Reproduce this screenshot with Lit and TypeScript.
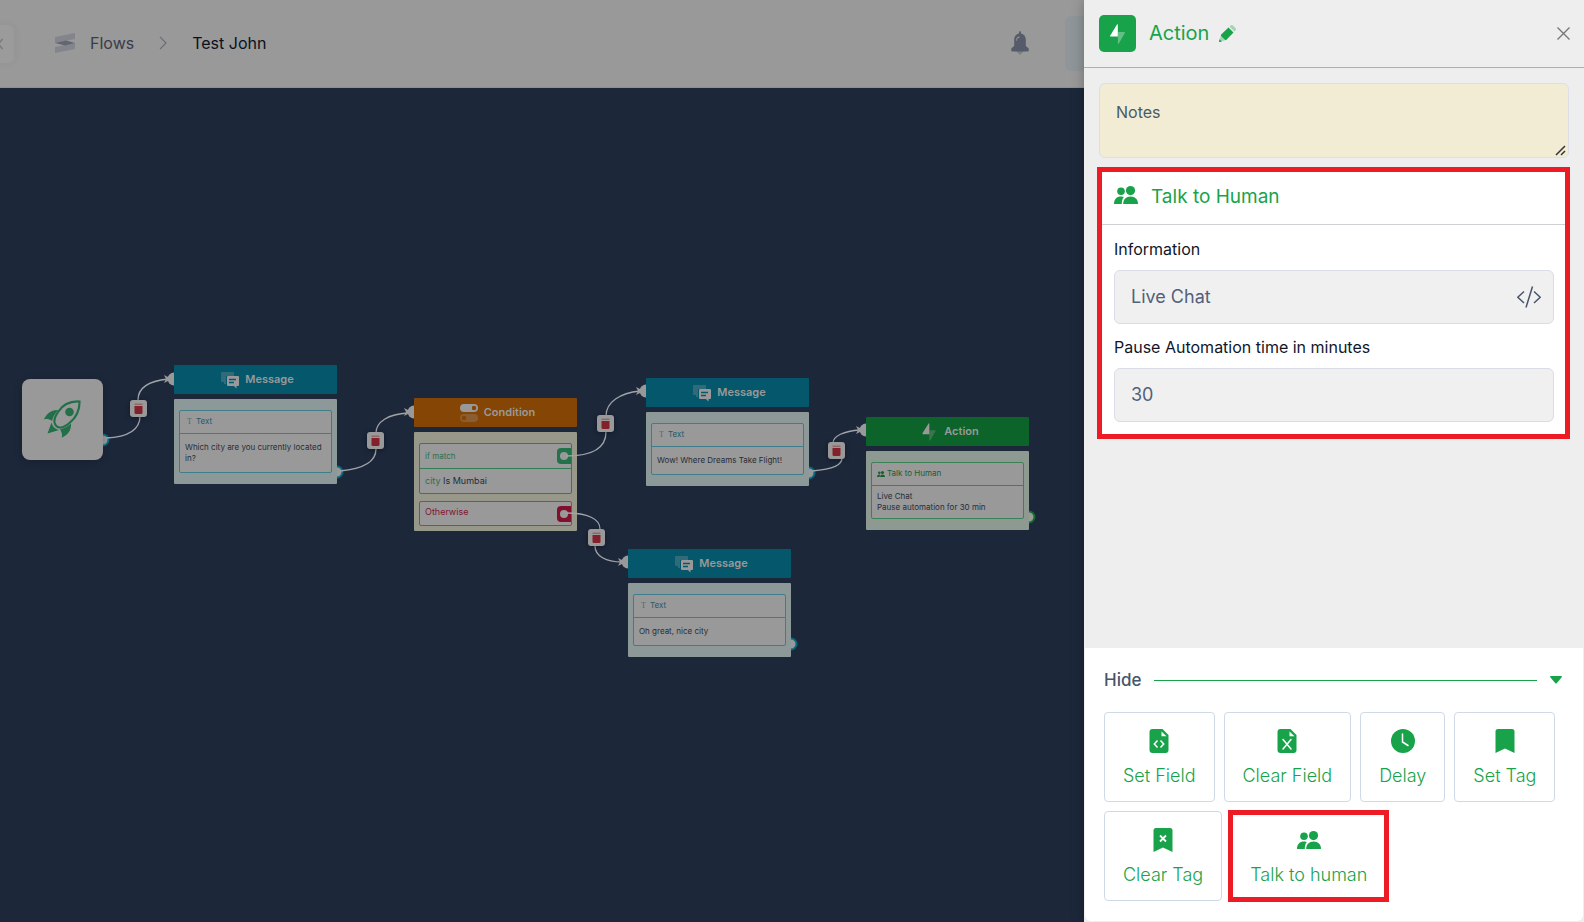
import { LitElement, html, svg, css, nothing } from "lit";
import { customElement, property, state } from "lit/decorators.js";
import { classMap } from "lit/directives/class-map.js";
import { styleMap } from "lit/directives/style-map.js";

const people = html`<svg viewBox="0 0 24 18" fill="currentColor" aria-hidden="true">
  <circle cx="7" cy="5.2" r="3.8" />
  <circle cx="16.5" cy="4.6" r="4.6" />
  <path d="M0 18c0-5 2.800-7.600 7-7.600 1.300 0 2 .2 2.800.6C8.400 12.600 7.800 15 7.800 18z" />
  <path d="M9.200 18c0-4.600 3-7.400 7.400-7.400S24 13.400 24 18z" />
</svg>`;

const bolt = html`<svg viewBox="0 0 18 24" fill="currentColor" aria-hidden="true">
  <path d="M8.400.5C8.900.1 9.400.3 9.400 1V15H1C.1 15 0 14.400.3 13.800z" />
  <path opacity=".32" d="M9.400 9.500h7.800c.8 0 1 .6.6 1.300L10.600 23.300c-.5.700-1.200.5-1.200-.3z" />
</svg>`;

const chat = html`<svg viewBox="0 0 18 16" fill="currentColor" aria-hidden="true">
  <path opacity=".3" d="M1 0h11a1 1 0 0 1 1 1v3H5v8H3V10H1a1 1 0 0 1-1-1V1a1 1 0 0 1 1-1z" />
  <path fill-rule="evenodd" d="M7 4h10a1 1 0 0 1 1 1v8a1 1 0 0 1-1 1h-1.500v2.500L13 14H7a1 1 0 0 1-1-1V5a1 1 0 0 1 1-1zm1 2.800v1.400h7V6.800zm0 3v1.400h5V9.800z" />
</svg>`;

const toggles = html`<svg viewBox="0 0 18 18" fill="currentColor" aria-hidden="true">
  <path fill-rule="evenodd" d="M4 0h10a4 4 0 0 1 0 8H4a4 4 0 0 1 0-8zm10 1.800a2.200 2.200 0 1 0 0 4.400 2.200 2.200 0 0 0 0-4.400z" />
  <path opacity=".3" fill-rule="evenodd" d="M4 10h10a4 4 0 0 1 0 8H4a4 4 0 0 1 0-8zm0 1.800a2.200 2.200 0 1 0 0 4.400 2.200 2.200 0 0 0 0-4.400z" />
</svg>`;

const fileShape = svg`<path d="M3 0h10l6 6v15a3 3 0 0 1-3 3H3a3 3 0 0 1-3-3V3a3 3 0 0 1 3-3z" fill="currentColor" /><path d="M12 2.500v4.700h5z" fill="#fff" />`;
const fileCode = html`<svg viewBox="0 0 19 24" aria-hidden="true">${fileShape}
  <path d="M8 11.500 4.800 15 8 18.500M11 11.500l3.200 3.500-3.200 3.500" fill="none" stroke="#fff" stroke-width="1.500" /></svg>`;
const fileClear = html`<svg viewBox="0 0 19 24" aria-hidden="true">${fileShape}
  <path d="M5.500 10.500l8 9.500M13.500 10.500l-8 9.500" fill="none" stroke="#fff" stroke-width="1.500" stroke-linecap="round" /></svg>`;
const clock = html`<svg viewBox="0 0 24 24" aria-hidden="true"><circle cx="12" cy="12" r="12" fill="currentColor" />
  <path d="M11.500 5v8l5.500 3.500" fill="none" stroke="#fff" stroke-width="1.500" stroke-linecap="round" /></svg>`;
const bookmark = html`<svg viewBox="0 0 19 24" aria-hidden="true"><path d="M2.500 0h14A2.500 2.500 0 0 1 19 2.500V24l-9.500-4.500L0 24V2.500A2.500 2.500 0 0 1 2.500 0z" fill="currentColor" /></svg>`;
const bookmarkClear = html`<svg viewBox="0 0 19 24" aria-hidden="true"><path d="M2.500 0h14A2.500 2.500 0 0 1 19 2.500V24l-9.500-4.500L0 24V2.500A2.500 2.500 0 0 1 2.500 0z" fill="currentColor" />
  <path d="M6.500 7.500l6 6M12.500 7.500l-6 6" stroke="#fff" stroke-width="1.800" /></svg>`;

type Kind = "message" | "condition" | "action";
interface FlowNodeData {
  kind: Kind;
  title: string;
  x: number;
  y: number;
  lines?: string[];
}

const NODES: FlowNodeData[] = [
  { kind: "message", title: "Message", x: 174, y: 277, lines: ["Which city are you currently located in?"] },
  { kind: "condition", title: "Condition", x: 414, y: 310 },
  { kind: "message", title: "Message", x: 646, y: 290, lines: ["Wow! Where Dreams Take Flight!"] },
  { kind: "message", title: "Message", x: 628, y: 461, lines: ["Oh great, nice city"] },
  { kind: "action", title: "Action", x: 866, y: 329, lines: ["Live Chat", "Pause automation for 30 min"] },
];

const IN_PORTS = [[174, 291], [414, 324], [646, 303], [628, 474], [866, 342]];
const OUT_PORTS: [number, number, string][] = [
  [103, 352, "#066a83"],
  [337, 384, "#066a83"],
  [809, 385, "#066a83"],
  [791, 556, "#066a83"],
  [1029, 429, "#12702f"],
];
const EDGES = [
  "M106 350C128 349 140 342 140 328V320H138V312C138 300 148 293 168 291",
  "M340 383C362 381 376 375 376 361V345C376 334 388 326 408 325",
  "M566 368C590 368 606 362 606 344V328C606 314 620 305 640 303",
  "M566 425C588 425 600 431 600 441V449H595V458C595 468 606 474 622 474",
  "M812 383C834 381 842 377 842 370V362H833V355C833 348 844 343 860 342",
];
const TRASH = [[130, 312], [367, 344], [597, 327], [588, 441], [828, 354]];

@customElement("flow-node")
class FlowNode extends LitElement {
  @property({ attribute: false }) data!: FlowNodeData;

  static styles = css`
    :host { display: block; width: 163px; color: #999; }
    .message { --main: #05586c; --body: #8d9999; --line: #3f7d8a; --label: #1e5a6c; }
    .condition { --main: #854504; --body: #98988a; --line: #2f7d51; --label: #2f6f4c; }
    .action { --main: #0d642a; --body: #8e9991; --line: #3b8257; --label: #15602f; }
    .node { display: flex; flex-direction: column; gap: 5px; }
    .head { display: flex; align-items: center; justify-content: center; gap: 6px; height: 29px; padding-left: 4px; border-radius: 1px; background: var(--main); font-size: 11px; line-height: 14px; font-weight: 600; }
    .head span { padding-bottom: 1px; }
    .head svg { width: 18px; height: 18px; }
    .body { display: flex; flex-direction: column; gap: 7px; background: var(--body); padding: 11px 5px; border-radius: 1px; }
    .condition .body { padding-bottom: 5px; }
    .card { border: 1px solid var(--line); border-radius: 2px; background: #999; font-size: 8px; line-height: 11px; color: #262d38; }
    .row { display: flex; align-items: center; gap: 4px; height: 22px; padding: 0 5px; color: var(--label); border-bottom: 1px solid var(--line); }
    .row span { padding-bottom: 2px; }
    .row svg { width: 8px; height: 6px; }
    .action .row { gap: 2px; }
    .row .glyph { font-family: "Liberation Serif", serif; opacity: .7; padding-left: 2px; }
    .text { padding: 8px 5px; }
    .text p { margin: 0; }
    .condition .row { justify-content: space-between; height: 24px; padding-right: 0; }
    .condition .row span { padding-bottom: 0; }
    .condition .text { padding: 6px 5px; font-size: 9px; line-height: 12px; }
    .condition .row.bad { border-bottom: 0; height: 23px; font-size: 9px; color: #82142f; }
    .condition .row.bad span { padding-bottom: 4px; }
    .bad-card { border-color: #a04058; }
    .key { color: #2f6f4c; }
    .tag { display: grid; place-items: center; width: 14px; height: 16px; border-radius: 4px 0 0 4px; background: #22734a; }
    .tag::after { content: ""; width: 8px; height: 8px; border-radius: 50%; background: #999; }
    .tag.stop { background: #82102c; }
    .action .text { padding: 5px; }
  `;

  render() {
    const { kind, title, lines = [] } = this.data;
    const icon = kind === "message" ? chat : kind === "condition" ? toggles : bolt;
    return html`<article class="node ${kind}">
      <header class="head">${icon}<span>${title}</span></header>
      <div class="body">
        ${kind === "condition"
          ? html`<div class="card">
                <div class="row"><span>if match</span><i class="tag"></i></div>
                <div class="text"><span class="key">city</span> Is Mumbai</div>
              </div>
              <div class="card bad-card"><div class="row bad"><span>Otherwise</span><i class="tag stop"></i></div></div>`
          : html`<div class="card">
              <div class="row">
                ${kind === "message" ? html`<span class="glyph">T</span><span>Text</span>` : html`${people}<span>Talk to Human</span>`}
              </div>
              <div class="text">${lines.map((l) => html`<p>${l}</p>`)}</div>
            </div>`}
      </div>
    </article>`;
  }
}

@customElement("flow-canvas")
class FlowCanvas extends LitElement {
  static styles = css`
    :host { display: block; position: relative; overflow: hidden; background: #1c273a; }
    .layer { position: absolute; left: 0; top: 0; overflow: visible; pointer-events: none; }
    flow-node, .start, .trash { position: absolute; }
    .start { left: 22px; top: 291px; box-sizing: border-box; width: 81px; height: 81px; padding: 0 2px 2px 0; display: grid; place-items: center; background: #999; border-radius: 8px; box-shadow: 0 2px 8px #0003; }
    .start svg { width: 38px; height: 38px; }
    .trash { display: grid; place-items: center; width: 17px; height: 17px; padding: 0; border: 0; border-radius: 3px; background: #999; box-shadow: 0 1px 5px #0006; }
    .trash svg { width: 9px; height: 11px; }
  `;

  render() {
    const at = (x: number, y: number) => styleMap({ left: `${x}px`, top: `${y}px` });
    return html`
      <svg class="layer" width="1084" height="834" aria-hidden="true">
        ${OUT_PORTS.map(([x, y, c]) => svg`<circle cx=${x} cy=${y} r="5.500" fill="#999" stroke=${c} stroke-width="2" />`)}
        ${IN_PORTS.map(([x, y]) => svg`<circle cx=${x} cy=${y} r="6.500" fill="#999" />`)}
      </svg>
      <div class="start">
        <svg viewBox="0 0 38 38" aria-hidden="true">
          <path d="M36.500 1.500C27 1 19.500 5 15 12c-3 4.500-4 8-3.500 10.500.8 3 2.600 4.600 5 5C19.500 28 23 26 27 22.500c6.500-5.500 9.700-12 9.500-21z" fill="none" stroke="#22704a" stroke-width="2.200" />
          <circle cx="26.500" cy="12" r="4.300" fill="#22704a" />
          <path d="M15 10C9 9.500 4 13 .8 19.500c3-.8 5.200-.5 8.200 1.500C10 17 12 13.500 15 10zM28 23.500c.5 6.500-3 11.500-9.200 14.200.6-3 .2-5.500-1.800-8.200 4-1 8-3 11-6zM8.500 22.500 4.500 33.500l11.500-3.500C12 29 9.500 26.500 8.500 22.500z" fill="#22704a" />
        </svg>
      </div>
      ${NODES.map((n) => html`<flow-node .data=${n} style=${at(n.x, n.y)}></flow-node>`)}
      <svg class="layer" width="1084" height="834" aria-hidden="true">
        ${EDGES.map((d) => svg`<path d=${d} fill="none" stroke="#a0a3a8" stroke-width="1.300" />`)}
        ${IN_PORTS.map(([x, y]) => svg`<path d="M${x - 10} ${y - 4}L${x - 2} ${y}L${x - 10} ${y + 4}L${x - 8} ${y}z" fill="#999" />`)}
      </svg>
      ${TRASH.map(([x, y]) => html`<button class="trash" aria-label="Delete connection" style=${at(x, y)}>
        <svg viewBox="0 0 9 11" aria-hidden="true"><path d="M.5 3h8v6.500A1.500 1.500 0 0 1 7 11H2A1.500 1.500 0 0 1 .5 9.500z" fill="#84202a" /><path d="M.5 1.200h8" stroke="#84202a" stroke-width="1" opacity=".6" /></svg>
      </button>`)}
    `;
  }
}

@customElement("action-panel")
class ActionPanel extends LitElement {
  @state() private open = true;

  static styles = css`
    :host { display: flex; flex-direction: column; background: #eee; box-shadow: 0 0 12px #0004; color: #18a34a; }
    * { box-sizing: border-box; }
    button { font: inherit; color: inherit; background: none; border: 0; padding: 0; cursor: pointer; }
    .head { display: flex; align-items: center; gap: 13px; height: 68px; padding: 0 14px 0 15px; border-bottom: 1px solid #a9b0ba; }
    .badge { display: grid; place-items: center; width: 37px; height: 37px; border-radius: 5px; background: #18a34a; color: #fff; }
    .badge svg { width: 15px; height: 20px; }
    h1, h2 { margin: 0; line-height: 28px; font-weight: 400; }
    h1 { font-size: 20px; padding-bottom: 2px; }
    h2 { font-size: 19px; padding-top: 4px; }
    .title { display: flex; align-items: center; gap: 10px; flex: 1; }
    .title svg { display: block; width: 17px; height: 17px; }
    .close svg { display: block; width: 13px; height: 13px; }
    .content { flex: 1; display: flex; flex-direction: column; gap: 11px; padding: 15px; }
    .notes { display: block; width: 100%; height: 75px; padding: 16px; border: 1px solid #dcdfe8; border-radius: 6px; background: #f3ecd5; font: 16px/24px Inter, sans-serif; color: #475569; resize: vertical; }
    .notes::placeholder { color: #475b66; }
    .notes::-webkit-resizer { background: url("data:image/svg+xml,%3Csvg xmlns='http://www.w3.org/2000/svg' viewBox='0 0 15 15'%3E%3Cpath d='M3 13 12 4M8 13l4-4' stroke='%23333' stroke-width='1.500'/%3E%3C/svg%3E") center / 100% no-repeat; }
    .marked { position: relative; }
    .marked::after { content: ""; position: absolute; inset: -2px -1px -2px -2px; border: 5px solid #ed1c24; pointer-events: none; }
    .tool.marked::after { inset: -2px -4px; }
    .card { background: #fff; }
    .card-head { display: flex; align-items: center; gap: 13px; height: 56px; padding: 0 15px 3px; border-bottom: 1px solid #ced0d4; }
    .card-head svg { width: 24px; height: 18px; }
    .fields { display: flex; flex-direction: column; gap: 13px; padding: 14px 15px 15px; }
    .field { display: flex; flex-direction: column; gap: 11px; color: #0f172a; font-size: 16px; line-height: 20px; }
    .box { display: flex; align-items: center; height: 54px; padding: 0 12px 0 16px; border: 1px solid #dadde8; border-radius: 6px; background: #f0f0f0; }
    .box input { flex: 1; min-width: 0; padding: 0; border: 0; outline: 0; background: none; font: 18px/24px Inter, sans-serif; color: #52607a; }
    .box svg { display: block; width: 24px; height: 22px; color: #475569; }
    .drawer { margin: 0 1px 1px; padding: 20px 21px 20px 19px; background: #fff; border-radius: 0 0 6px 6px; }
    .toggle { display: flex; align-items: center; gap: 13px; width: 100%; height: 24px; font-size: 17px; font-weight: 500; color: #475569; }
    .toggle hr { flex: 1; margin: 0; border: 0; height: 1px; background: #18a34a; }
    .toggle svg { width: 12px; height: 8px; color: #18a34a; }
    .tools { display: flex; flex-wrap: wrap; gap: 9px; padding-top: 20px; }
    .tool { display: flex; flex-direction: column; align-items: center; gap: 11px; height: 90px; padding: 16px 18px 0; border: 1px solid #cfdae6; border-radius: 4px; font-size: 18px; line-height: 24px; font-weight: 300; }
    .tool svg { width: 24px; height: 24px; }
  `;

  render() {
    const tools = [
      { label: "Set Field", icon: fileCode },
      { label: "Clear Field", icon: fileClear },
      { label: "Delay", icon: clock },
      { label: "Set Tag", icon: bookmark },
      { label: "Clear Tag", icon: bookmarkClear },
      { label: "Talk to human", icon: people, marked: true },
    ];
    return html`
      <header class="head">
        <span class="badge">${bolt}</span>
        <div class="title">
          <h1>Action</h1>
          <button aria-label="Rename">
            <svg viewBox="0 0 17 17" aria-hidden="true">
              <path d="M9.500 2.500l5 5-7 7.300c-.6.5-1.200.5-1.700 0L2.200 11.200c-.5-.5-.5-1.100 0-1.700z" fill="#18a34a" />
              <path d="M10.500 1.500 11.500.6c.8-.7 1.800-.7 2.500 0l2.400 2.400c.7.7.7 1.700 0 2.400l-1 1zM1.700 11l4.300 4.300L.8 17c-.5.100-.9-.3-.8-.8z" fill="#18a34a" opacity=".35" />
              <path d="M.6 14.200 2.800 16.400.8 17c-.5.100-.9-.3-.8-.8z" fill="#18a34a" />
            </svg>
          </button>
        </div>
        <button class="close" aria-label="Close"><svg viewBox="0 0 13 13" aria-hidden="true"><path d="M.5.5l12 12M12.500.5l-12 12" stroke="#777" stroke-width="1.400" /></svg></button>
      </header>
      <div class="content">
        <textarea class="notes" placeholder="Notes" aria-label="Notes"></textarea>
        <section class="card marked">
          <header class="card-head">${people}<h2>Talk to Human</h2></header>
          <div class="fields">
            <div class="field">
              <label for="info">Information</label>
              <div class="box">
                <input id="info" type="text" value="Live Chat" />
                <button aria-label="Insert variable"><svg viewBox="0 0 24 22" fill="none" stroke="currentColor" stroke-width="1.500" aria-hidden="true"><path d="M7 5.500.8 11.200 7 17M17 5.500l6.200 5.700L17 17M15.500.5 9 21.500" /></svg></button>
              </div>
            </div>
            <div class="field">
              <label for="pause">Pause Automation time in minutes</label>
              <div class="box"><input id="pause" type="text" inputmode="numeric" value="30" /></div>
            </div>
          </div>
        </section>
      </div>
      <section class="drawer">
        <button class="toggle" aria-expanded=${this.open} @click=${() => (this.open = !this.open)}>
          <span>${this.open ? "Hide" : "Show"}</span><hr />
          <svg viewBox="0 0 12 8" aria-hidden="true"><path d="M.8 0h10.400c.7 0 1 .8.5 1.300L6.700 7.200c-.4.4-1 .4-1.400 0L.3 1.300C-.2.800.1 0 .8 0z" fill="currentColor" /></svg>
        </button>
        ${this.open
          ? html`<div class="tools">${tools.map((t) => html`<button class=${classMap({ tool: true, marked: !!t.marked })}>${t.icon}<span>${t.label}</span></button>`)}</div>`
          : nothing}
      </section>
    `;
  }
}

@customElement("app-root")
class AppRoot extends LitElement {
  static styles = css`
    :host { display: grid; grid-template-columns: minmax(0, 1fr) 500px; min-height: 100vh; font-family: Inter, sans-serif; }
    .main { display: flex; flex-direction: column; min-width: 0; }
    .bar { display: flex; align-items: center; box-sizing: border-box; height: 88px; background: #999; border-bottom: 1px solid #8b8f90; }
    button { border: 0; padding: 0; cursor: pointer; }
    .back { width: 14px; height: 38px; border-radius: 0 6px 6px 0; background: #9b9b9b; box-shadow: 0 0 10px #0000000f; display: flex; align-items: center; }
    .back svg { width: 4px; height: 14px; }
    .crumbs { display: flex; align-items: center; flex: 1; margin-left: 41px; padding-bottom: 1px; font-size: 16px; line-height: 24px; color: #0b111c; }
    .crumbs svg { flex: none; }
    .mark { width: 20px; height: 20px; }
    .link { margin: 0 25px 0 15px; color: #373d4a; text-decoration: none; }
    .sep { width: 8px; height: 14px; margin-right: 25px; }
    .bell { background: none; margin-right: 36px; padding-bottom: 2px; }
    .bell svg { display: block; width: 18px; height: 24px; }
    .more { width: 19px; height: 55px; border-radius: 6px 0 0 6px; background: #8f9598; }
    flow-canvas { flex: 1; }
    action-panel { z-index: 1; }
  `;

  render() {
    return html`
      <main class="main">
        <header class="bar">
          <button class="back" aria-label="Back"><svg viewBox="0 0 4 14"><path d="M2.500 2-1.500 7l4 5" fill="none" stroke="#777a82" stroke-width="1.500" /></svg></button>
          <nav class="crumbs" aria-label="Breadcrumb">
            <svg class="mark" viewBox="0 0 20 20" aria-hidden="true">
              <path d="M0 4 20 0v6L0 10zM0 14l20-4v6L0 20z" fill="#83858c" />
              <path d="M0 10l11-2.500L20 10l-10 2.500z" fill="#626670" />
            </svg>
            <a class="link" href="#flows">Flows</a>
            <svg class="sep" viewBox="0 0 8 14" aria-hidden="true"><path d="M1 .8 7 7l-6 6.200" fill="none" stroke="#6a6d76" stroke-width="1.200" /></svg>
            <span>Test John</span>
          </nav>
          <button class="bell" aria-label="Notifications">
            <svg viewBox="0 0 18 24" aria-hidden="true">
              <path d="M5 20h8l-4 4z" fill="#7b7e86" />
              <path fill-rule="evenodd" d="M8 2.500C8 1 8.300 0 9 0s1 1 1 2.500c3 .6 4.800 3 4.800 6V15l2.400 2c1 1 .8 3.500-.6 3.500H1.400C0 20.500-.2 18 .8 17l2.400-2V8.500c0-3 1.800-5.400 4.800-6zM5.500 10c.2-2.200 1.200-3 3-3.300V5.500C6.500 5.700 5 7 4.900 10z" fill="#555b69" />
            </svg>
          </button>
          <div class="more"></div>
        </header>
        <flow-canvas></flow-canvas>
      </main>
      <action-panel></action-panel>
    `;
  }
}
